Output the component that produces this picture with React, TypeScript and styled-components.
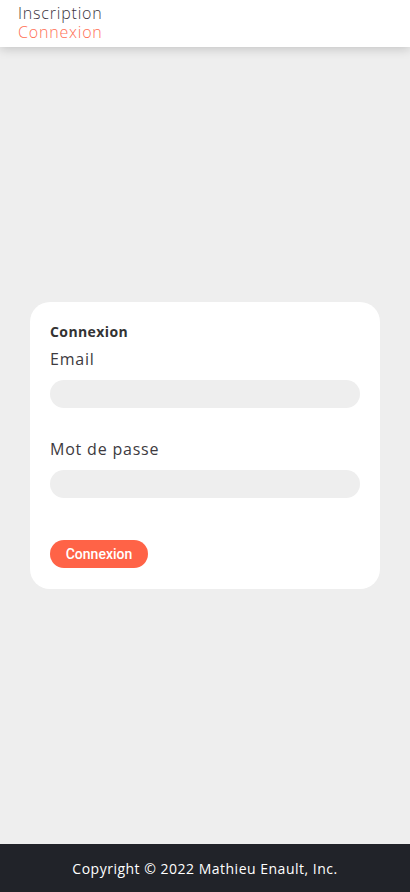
import React from "react";
import styled, { createGlobalStyle } from "styled-components";

const Global = createGlobalStyle`
  html, body { margin: 0; padding: 0; height: 100%; }
  body { background: #eeeeee; font-family: "Open Sans", "DejaVu Sans", sans-serif; }
  #root { min-height: 100vh; display: flex; flex-direction: column; }
  * { box-sizing: border-box; }
`;

const Header = styled.header`
  background: #ffffff;
  height: 47px;
  padding: 4px 18px 0;
  box-shadow: 0 2px 10px rgba(0, 0, 0, 0.18);
  position: relative;
  z-index: 1;
  display: flex;
  flex-direction: column;
`;

const NavLink = styled.a<{ $active?: boolean }>`
  font-size: 16px;
  line-height: 19px;
  letter-spacing: 0.8px;
  color: ${(p) => (p.$active ? "#ff6f55" : "#3b3440")};
  text-decoration: none;
  font-weight: 300;
`;

const Main = styled.main`
  flex: 1;
  display: flex;
  align-items: center;
  justify-content: center;
  padding: 0 30px;
`;

const Card = styled.form`
  width: 100%;
  background: #ffffff;
  border-radius: 20px;
  padding: 21px 20px 21px;
  display: flex;
  flex-direction: column;
`;

const Title = styled.h2`
  margin: 0;
  font-size: 14px;
  line-height: 17px;
  letter-spacing: 0.4px;
  font-weight: 700;
  color: #333333;
`;

const Label = styled.label<{ $top: number }>`
  margin-top: ${(p) => p.$top}px;
  font-size: 16px;
  line-height: 19px;
  letter-spacing: 0.8px;
  color: #3d3a40;
  font-weight: 400;
`;

const Input = styled.input`
  margin-top: 11px;
  height: 28px;
  border: none;
  border-radius: 14px;
  background: #eeeeee;
  outline: none;
  padding: 0 12px;
`;

const Button = styled.button`
  margin-top: 42px;
  align-self: flex-start;
  width: 98px;
  height: 28px;
  border: none;
  border-radius: 14px;
  background: #ff6347;
  color: #ffffff;
  font-family: Roboto, "Liberation Sans", sans-serif;
  font-weight: 500;
  font-size: 14px;
  cursor: pointer;
`;

const Footer = styled.footer`
  background: #212329;
  height: 48px;
  display: flex;
  align-items: center;
  justify-content: center;
  color: #ffffff;
  font-size: 14px;
  letter-spacing: 0.5px;
`;

export default function App() {
  return (
    <>
      <Global />
      <Header>
        <NavLink href="#">Inscription</NavLink>
        <NavLink href="#" $active>Connexion</NavLink>
      </Header>
      <Main>
        <Card onSubmit={(e) => e.preventDefault()}>
          <Title>Connexion</Title>
          <Label $top={10}>Email</Label>
          <Input type="email" />
          <Label $top={32}>Mot de passe</Label>
          <Input type="password" />
          <Button type="submit">Connexion</Button>
        </Card>
      </Main>
      <Footer>Copyright © 2022 Mathieu Enault, Inc.</Footer>
    </>
  );
}
